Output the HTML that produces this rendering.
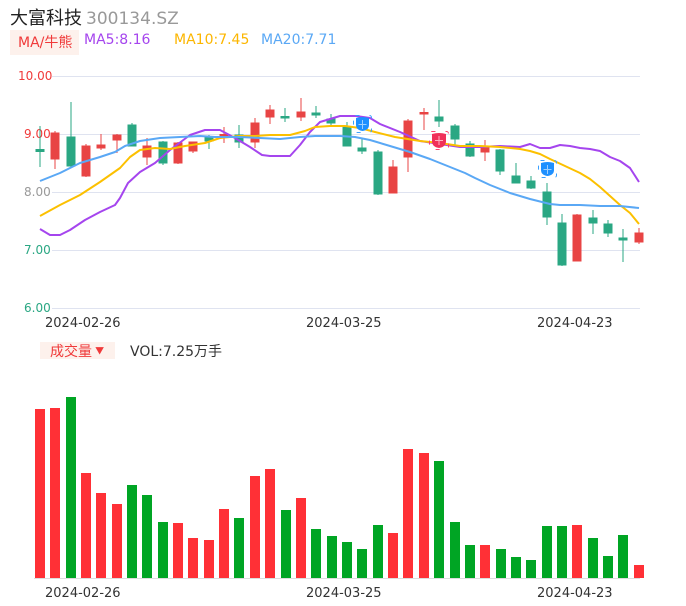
<!DOCTYPE html>
<html><head><meta charset="utf-8"><style>
body{margin:0;background:#fff;width:686px;height:606px;overflow:hidden;font-family:"Liberation Sans","Noto Sans CJK SC",sans-serif;position:relative}
.t{position:absolute;white-space:nowrap}
</style></head><body>
<div class="t" style="left:10px;top:4px;font-size:18px;color:#222;font-family:'Noto Sans CJK SC',sans-serif">大富科技 <span style="color:#999;font-family:'DejaVu Sans',sans-serif;font-size:17px">300134.SZ</span></div>
<div class="t" style="left:10px;top:30px;width:69px;height:25px;background:#fdf1ec"></div>
<div class="t" style="left:18px;top:32px;font-size:14px;color:#f03a3a;font-family:'DejaVu Sans','Noto Sans CJK SC',sans-serif">MA/牛熊</div>
<div class="t" style="left:84px;top:32px;font-size:14px;color:#a545ee;font-family:'DejaVu Sans',sans-serif">MA5:8.16</div>
<div class="t" style="left:174px;top:32px;font-size:14px;color:#fcb600;font-family:'DejaVu Sans',sans-serif">MA10:7.45</div>
<div class="t" style="left:261px;top:32px;font-size:14px;color:#5aa8f5;font-family:'DejaVu Sans',sans-serif">MA20:7.71</div>
<div class="t" style="left:40px;top:342px;width:75px;height:17px;background:#fdf1ec"></div>
<div class="t" style="left:50px;top:341px;font-size:14px;color:#f03a3a;font-family:'Noto Sans CJK SC',sans-serif">成交量 <span style="font-size:9px;vertical-align:2px">▼</span></div>
<div class="t" style="left:130px;top:341px;font-size:14px;color:#333;font-family:'DejaVu Sans','Noto Sans CJK SC',sans-serif">VOL:7.25万手</div>
<svg width="686" height="606" style="position:absolute;left:0;top:0" font-family="DejaVu Sans,sans-serif">
<g stroke="#dfe3f0" stroke-width="1">
<line x1="52" y1="76.5" x2="640" y2="76.5"/><line x1="52" y1="134.5" x2="640" y2="134.5"/><line x1="52" y1="192.5" x2="640" y2="192.5"/><line x1="52" y1="250.5" x2="640" y2="250.5"/><line x1="52" y1="308.5" x2="640" y2="308.5"/>
</g>
<g font-size="12">
<text x="18" y="80" fill="#f03a3a">10.00</text>
<text x="24" y="138" fill="#f03a3a">9.00</text>
<text x="24" y="196" fill="#999">8.00</text>
<text x="24" y="254" fill="#2aa783">7.00</text>
<text x="24" y="312" fill="#2aa783">6.00</text>
</g>
<g font-size="13" fill="#333">
<text x="45" y="327">2024-02-26</text><text x="306" y="327">2024-03-25</text><text x="537" y="327">2024-04-23</text>
<text x="45" y="597">2024-02-26</text><text x="306" y="597">2024-03-25</text><text x="537" y="597">2024-04-23</text>
</g>
<g stroke-width="1">
<g fill="#2aa783" stroke="#2aa783"><line x1="40" y1="126" x2="40" y2="167"/><rect x="36" y="149.5" width="8" height="2"/></g>
<g fill="#e84444" stroke="#e84444"><line x1="55" y1="131" x2="55" y2="169"/><rect x="51" y="133" width="8" height="26"/></g>
<g fill="#2aa783" stroke="#2aa783"><line x1="71" y1="102" x2="71" y2="166"/><rect x="67" y="137" width="8" height="29"/></g>
<g fill="#e84444" stroke="#e84444"><line x1="86" y1="144" x2="86" y2="177"/><rect x="82" y="146" width="8" height="30"/></g>
<g fill="#e84444" stroke="#e84444"><line x1="101" y1="134" x2="101" y2="150"/><rect x="97" y="145" width="8" height="3"/></g>
<g fill="#e84444" stroke="#e84444"><line x1="117" y1="134" x2="117" y2="153"/><rect x="113" y="135" width="8" height="5"/></g>
<g fill="#2aa783" stroke="#2aa783"><line x1="132" y1="123" x2="132" y2="146"/><rect x="128" y="125" width="8" height="21"/></g>
<g fill="#e84444" stroke="#e84444"><line x1="147" y1="138" x2="147" y2="165"/><rect x="143" y="146" width="8" height="11"/></g>
<g fill="#2aa783" stroke="#2aa783"><line x1="163" y1="141" x2="163" y2="165"/><rect x="159" y="142" width="8" height="21"/></g>
<g fill="#e84444" stroke="#e84444"><line x1="178" y1="142" x2="178" y2="164"/><rect x="174" y="143" width="8" height="20"/></g>
<g fill="#e84444" stroke="#e84444"><line x1="193" y1="142" x2="193" y2="153"/><rect x="189" y="142" width="8" height="9"/></g>
<g fill="#2aa783" stroke="#2aa783"><line x1="209" y1="135" x2="209" y2="149"/><rect x="205" y="137" width="8" height="4"/></g>
<g fill="#e84444" stroke="#e84444"><line x1="224" y1="127" x2="224" y2="143"/><rect x="220" y="134.5" width="8" height="1.5"/></g>
<g fill="#2aa783" stroke="#2aa783"><line x1="239" y1="125" x2="239" y2="148"/><rect x="235" y="135" width="8" height="7"/></g>
<g fill="#e84444" stroke="#e84444"><line x1="255" y1="118" x2="255" y2="148"/><rect x="251" y="123" width="8" height="19"/></g>
<g fill="#e84444" stroke="#e84444"><line x1="270" y1="105" x2="270" y2="124"/><rect x="266" y="110" width="8" height="7"/></g>
<g fill="#2aa783" stroke="#2aa783"><line x1="285" y1="108" x2="285" y2="122"/><rect x="281" y="116.5" width="8" height="1.5"/></g>
<g fill="#e84444" stroke="#e84444"><line x1="301" y1="98" x2="301" y2="121"/><rect x="297" y="112" width="8" height="5"/></g>
<g fill="#2aa783" stroke="#2aa783"><line x1="316" y1="106" x2="316" y2="118"/><rect x="312" y="113" width="8" height="2"/></g>
<g fill="#2aa783" stroke="#2aa783"><line x1="331" y1="114" x2="331" y2="125"/><rect x="327" y="119" width="8" height="4"/></g>
<g fill="#2aa783" stroke="#2aa783"><line x1="347" y1="122" x2="347" y2="146"/><rect x="343" y="127" width="8" height="19"/></g>
<g fill="#2aa783" stroke="#2aa783"><line x1="362" y1="139" x2="362" y2="154"/><rect x="358" y="148" width="8" height="3"/></g>
<g fill="#2aa783" stroke="#2aa783"><line x1="378" y1="150" x2="378" y2="195"/><rect x="374" y="152" width="8" height="42"/></g>
<g fill="#e84444" stroke="#e84444"><line x1="393" y1="160" x2="393" y2="193"/><rect x="389" y="167" width="8" height="26"/></g>
<g fill="#e84444" stroke="#e84444"><line x1="408" y1="119" x2="408" y2="172"/><rect x="404" y="121" width="8" height="36"/></g>
<g fill="#e84444" stroke="#e84444"><line x1="424" y1="108" x2="424" y2="130"/><rect x="420" y="112.5" width="8" height="1.5"/></g>
<g fill="#2aa783" stroke="#2aa783"><line x1="439" y1="100" x2="439" y2="127"/><rect x="435" y="117" width="8" height="4"/></g>
<g fill="#2aa783" stroke="#2aa783"><line x1="455" y1="124" x2="455" y2="147"/><rect x="451" y="126" width="8" height="13"/></g>
<g fill="#2aa783" stroke="#2aa783"><line x1="470" y1="141" x2="470" y2="157"/><rect x="466" y="144" width="8" height="12"/></g>
<g fill="#e84444" stroke="#e84444"><line x1="485" y1="140" x2="485" y2="161"/><rect x="481" y="147" width="8" height="5"/></g>
<g fill="#2aa783" stroke="#2aa783"><line x1="500" y1="149" x2="500" y2="175"/><rect x="496" y="150" width="8" height="21"/></g>
<g fill="#2aa783" stroke="#2aa783"><line x1="516" y1="163" x2="516" y2="183"/><rect x="512" y="176" width="8" height="7"/></g>
<g fill="#2aa783" stroke="#2aa783"><line x1="531" y1="176" x2="531" y2="189"/><rect x="527" y="181" width="8" height="7"/></g>
<g fill="#2aa783" stroke="#2aa783"><line x1="547" y1="183" x2="547" y2="225"/><rect x="543" y="192" width="8" height="25"/></g>
<g fill="#2aa783" stroke="#2aa783"><line x1="562" y1="214" x2="562" y2="266"/><rect x="558" y="223" width="8" height="42"/></g>
<g fill="#e84444" stroke="#e84444"><line x1="577" y1="214" x2="577" y2="261"/><rect x="573" y="215" width="8" height="46"/></g>
<g fill="#2aa783" stroke="#2aa783"><line x1="593" y1="210" x2="593" y2="234"/><rect x="589" y="218" width="8" height="5"/></g>
<g fill="#2aa783" stroke="#2aa783"><line x1="608" y1="220" x2="608" y2="237"/><rect x="604" y="224" width="8" height="9"/></g>
<g fill="#2aa783" stroke="#2aa783"><line x1="623" y1="229" x2="623" y2="262"/><rect x="619" y="238" width="8" height="2"/></g>
<g fill="#e84444" stroke="#e84444"><line x1="639" y1="228" x2="639" y2="244"/><rect x="635" y="233" width="8" height="9"/></g>
</g>
<g fill="none" stroke-width="2" stroke-linejoin="round">
<polyline stroke="#a545ee" points="40,229 50,235 60,235 70,230 85,220 100,212 115,205 120,198 128,183 140,172 155,163 170,150 190,135 205,130 220,130 235,138 250,147 262,155 270,156 290,156 300,145 310,132 320,122 340,116 356,116 370,118 380,124 400,132 420,141 440,144 460,147 480,147 500,146 520,147 530,144 540,148 550,148 560,145 570,146 580,148 590,149 600,151 610,157 620,161 630,168 639,182"/>
<polyline stroke="#fcc000" points="40,216 60,205 80,195 100,182 120,168 130,157 140,150 155,148 170,149 185,146 205,143 220,138 240,136 255,136 270,135 290,135 305,131 315,127 330,126 345,126 360,128 375,132 395,137 420,141 440,143 460,146 480,146 500,147 520,149 530,151 540,154 550,159 565,166 580,173 590,179 600,187 610,196 620,205 630,213 639,224"/>
<polyline stroke="#5aa8f5" points="40,181 60,173 80,163 100,157 115,152 125,146 140,141 160,138 180,137 200,136 215,137 240,137 260,138 280,139 300,137 315,136 340,136 355,137 370,140 390,146 410,152 430,159 450,167 465,173 475,178 490,185 510,193 530,199 550,204 560,205 580,205 600,206 620,206 639,208"/>
</g>
<g>
<rect x="353.5" y="115.5" width="18" height="17" rx="2" fill="none" stroke="#3aa0ff" stroke-dasharray="4 10" stroke-width="1"/>
<path d="M356,118 q6.5,-2 13,0 v7 q0,5 -6.5,6 q-6.5,-1 -6.5,-6z" fill="#1e90ff"/>
<path d="M362.5,120 v9 M358.5,124.5 h8" stroke="#9fd0ff" stroke-width="1"/>
<rect x="538.5" y="160.5" width="18" height="17" rx="2" fill="none" stroke="#3aa0ff" stroke-dasharray="4 10" stroke-width="1"/>
<path d="M541,163 q6.5,-2 13,0 v7 q0,5 -6.5,6 q-6.5,-1 -6.5,-6z" fill="#1e90ff"/>
<path d="M547.5,165 v9 M543.5,169.5 h8" stroke="#9fd0ff" stroke-width="1"/>
<rect x="429.5" y="131.5" width="19" height="18" rx="2" fill="none" stroke="#ff4070" stroke-dasharray="4 10" stroke-width="1"/>
<path d="M432,134 q7,-2 14,0 v7 q0,6 -7,7 q-7,-1 -7,-7z" fill="#f0305a"/>
<path d="M439,136 v9 M435,140.5 h8" stroke="#ffb0c0" stroke-width="1"/>
</g>
<line x1="34" y1="578.5" x2="640" y2="578.5" stroke="#ddd"/>
<g fill="#ff3036">
<rect x="35" y="409" width="10" height="169"/><rect x="50" y="408" width="10" height="170"/>
<rect x="81" y="473" width="10" height="105"/><rect x="96" y="493" width="10" height="85"/><rect x="112" y="504" width="10" height="74"/>
<rect x="173" y="523" width="10" height="55"/><rect x="188" y="538" width="10" height="40"/><rect x="204" y="540" width="10" height="38"/><rect x="219" y="509" width="10" height="69"/>
<rect x="250" y="476" width="10" height="102"/><rect x="265" y="469" width="10" height="109"/><rect x="296" y="498" width="10" height="80"/>
<rect x="388" y="533" width="10" height="45"/><rect x="403" y="449" width="10" height="129"/><rect x="419" y="453" width="10" height="125"/>
<rect x="480" y="545" width="10" height="33"/><rect x="572" y="525" width="10" height="53"/><rect x="634" y="565" width="10" height="13"/>
</g>
<g fill="#00a524">
<rect x="66" y="397" width="10" height="181"/><rect x="127" y="485" width="10" height="93"/><rect x="142" y="495" width="10" height="83"/><rect x="158" y="522" width="10" height="56"/>
<rect x="234" y="518" width="10" height="60"/><rect x="281" y="510" width="10" height="68"/><rect x="311" y="529" width="10" height="49"/><rect x="327" y="536" width="10" height="42"/>
<rect x="342" y="542" width="10" height="36"/><rect x="357" y="549" width="10" height="29"/><rect x="373" y="525" width="10" height="53"/>
<rect x="434" y="461" width="10" height="117"/><rect x="450" y="522" width="10" height="56"/><rect x="465" y="545" width="10" height="33"/>
<rect x="496" y="549" width="10" height="29"/><rect x="511" y="557" width="10" height="21"/><rect x="526" y="560" width="10" height="18"/>
<rect x="542" y="526" width="10" height="52"/><rect x="557" y="526" width="10" height="52"/><rect x="588" y="538" width="10" height="40"/>
<rect x="603" y="556" width="10" height="22"/><rect x="618" y="535" width="10" height="43"/>
</g>
</svg>
</body></html>
